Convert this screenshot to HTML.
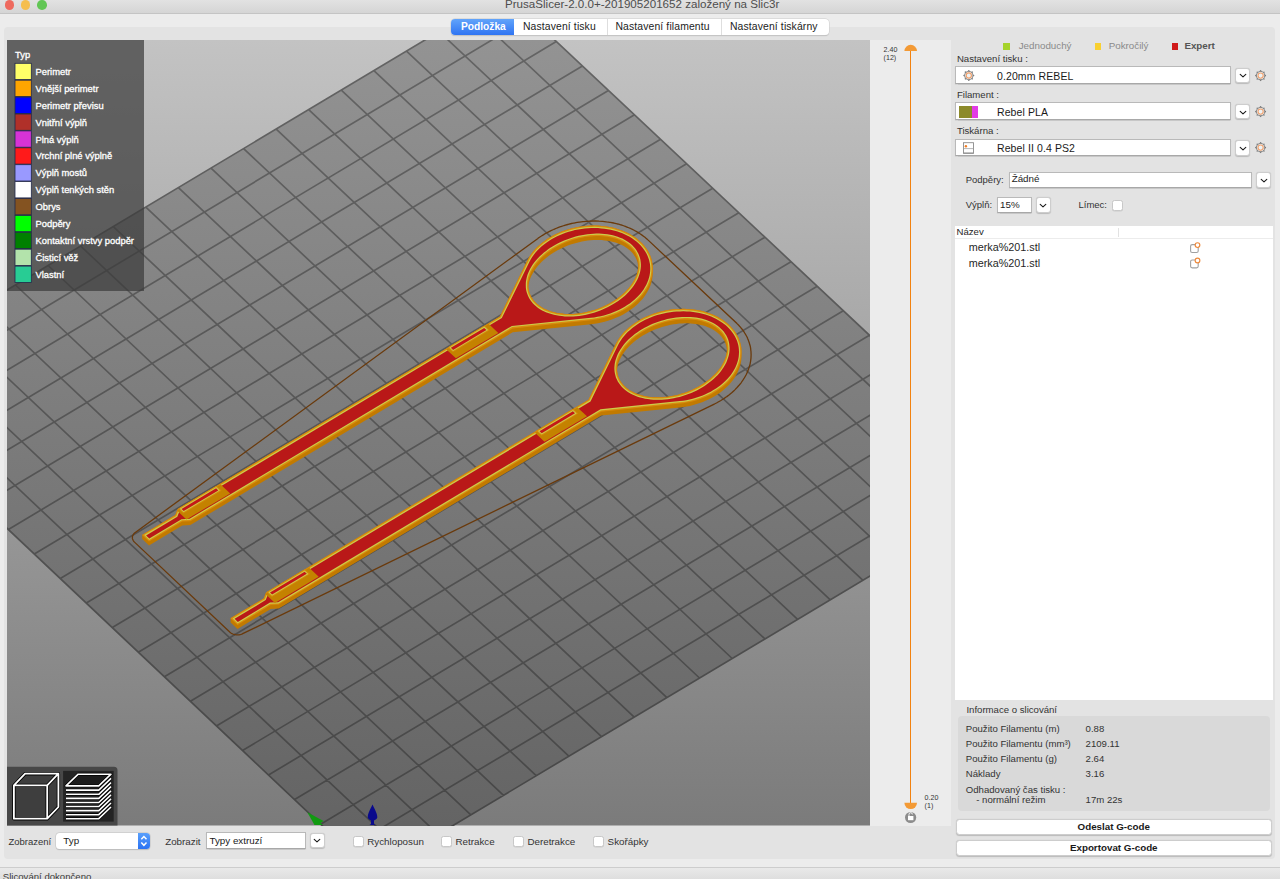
<!DOCTYPE html>
<html><head><meta charset="utf-8"><style>
*{margin:0;padding:0;box-sizing:border-box}
body{width:1280px;height:879px;overflow:hidden;background:#ececec;position:relative;font-family:"Liberation Sans",sans-serif;color:#262626}
.abs{position:absolute}
.t{position:absolute;white-space:nowrap;line-height:1}
.lg{font-family:"Liberation Sans",sans-serif;font-size:9.4px;fill:#fff;stroke:#fff;stroke-width:0.3px}
.combo{position:absolute;background:#fff;border:1px solid #b9b9b9;border-bottom-color:#a8a8a8;box-shadow:0 0.5px 1px rgba(0,0,0,0.12)}
.btn{position:absolute;background:#fff;border:1px solid #cdcdcd;border-radius:3px;box-shadow:0 0.5px 1px rgba(0,0,0,0.18)}
.chev{position:absolute;left:50%;top:50%;transform:translate(-50%,-38%)}
.cb{position:absolute;width:11px;height:11px;background:#fff;border:1px solid #c8c8c8;border-radius:2.5px;box-shadow:0 0.5px 0.5px rgba(0,0,0,0.1)}
</style></head><body>
<!-- title bar -->
<div class="abs" style="left:0;top:0;width:1280px;height:13.5px;background:linear-gradient(#e2e2e2,#d5d5d5);border-bottom:1px solid #c4c4c4"></div>
<div class="abs" style="left:4.8px;top:0;width:9.6px;height:9.6px;border-radius:50%;background:#ee6a5e;transform:translateY(0)"></div>
<div class="abs" style="left:20.8px;top:0;width:9.6px;height:9.6px;border-radius:50%;background:#f5be4f"></div>
<div class="abs" style="left:37px;top:0;width:9.6px;height:9.6px;border-radius:50%;background:#62c655"></div>
<div class="t" style="left:505px;top:-2px;font-size:11.6px;color:#4d4d4d">PrusaSlicer-2.0.0+-201905201652 založený na Slic3r</div>
<!-- inner panel -->
<div class="abs" style="left:4.4px;top:26.6px;width:1271px;height:832.3px;background:#e3e3e3;border-radius:4px"></div>
<!-- tabs -->
<div class="abs" style="left:451px;top:19px;width:378px;height:16px;background:#fff;border-radius:4px;box-shadow:0 0 0 0.5px #cfcfcf,0 0.5px 1px rgba(0,0,0,0.2)"></div>
<div class="abs" style="left:451px;top:19px;width:63px;height:16px;background:linear-gradient(#62a4fa,#2f74f2);border-radius:4px 0 0 4px"></div>
<div class="abs" style="left:607px;top:19px;width:1px;height:16px;background:#dedede"></div>
<div class="abs" style="left:721px;top:19px;width:1px;height:16px;background:#dedede"></div>
<div class="t" style="left:461px;top:21.8px;font-size:10.2px;font-weight:bold;color:#fff">Podložka</div>
<div class="t" style="left:523px;top:21.5px;font-size:10.4px;letter-spacing:0.12px;color:#222">Nastavení tisku</div>
<div class="t" style="left:615.5px;top:21.5px;font-size:10.4px;letter-spacing:0.12px;color:#222">Nastavení filamentu</div>
<div class="t" style="left:730px;top:21.5px;font-size:10.4px;letter-spacing:0.12px;color:#222">Nastavení tiskárny</div>
<!-- viewport -->
<svg class="abs" style="left:7px;top:40px" width="863" height="785.5" viewBox="7 40 863 785.5">
<defs>
<linearGradient id="bg" x1="0" y1="40" x2="0" y2="825.5" gradientUnits="userSpaceOnUse"><stop offset="0" stop-color="#c3c3c3"/><stop offset="1" stop-color="#7b7b7b"/></linearGradient>
<linearGradient id="bedg" x1="0" y1="40" x2="0" y2="825.5" gradientUnits="userSpaceOnUse"><stop offset="0" stop-color="#939393"/><stop offset="1" stop-color="#646464"/></linearGradient>
<linearGradient id="lineg" x1="0" y1="40" x2="0" y2="825.5" gradientUnits="userSpaceOnUse"><stop offset="0" stop-color="#646464"/><stop offset="1" stop-color="#474747"/></linearGradient>
</defs>
<rect x="7" y="40" width="863" height="785.5" fill="url(#bg)"/>
<path d="M504.2 -7.4L1026.4 482.5L372.8 873.5L-147.4 382.5Z" fill="url(#bedg)"/>
<path d="M504.2 -7.4L-147.4 382.5M504.2 -7.4L1026.4 482.5M530.3 17.0L-121.4 407.0M471.7 12.1L993.7 502.1M556.3 41.5L-95.5 431.5M439.1 31.6L961.0 521.6M582.4 65.9L-69.5 456.0M406.5 51.1L928.3 541.2M608.4 90.4L-43.6 480.5M373.9 70.6L895.6 560.7M634.5 114.8L-17.6 505.0M341.3 90.1L863.0 580.3M660.6 139.3L8.4 529.5M308.7 109.6L830.3 599.8M686.6 163.8L34.3 554.0M276.2 129.1L797.6 619.4M712.7 188.2L60.3 578.5M243.6 148.6L764.9 638.9M738.8 212.7L86.3 603.1M211.0 168.1L732.2 658.5M764.9 237.2L112.3 627.6M178.4 187.6L699.5 678.0M791.0 261.7L138.3 652.2M145.8 207.1L666.9 697.6M817.2 286.2L164.4 676.7M113.3 226.6L634.2 717.1M843.3 310.7L190.4 701.3M80.7 246.1L601.5 736.6M869.4 335.2L216.4 725.9M48.1 265.5L568.8 756.2M895.6 359.8L242.5 750.5M15.5 285.0L536.2 775.7M921.7 384.3L268.5 775.0M-17.0 304.5L503.5 795.3M947.9 408.8L294.6 799.6M-49.6 324.0L470.8 814.8M974.0 433.4L320.6 824.2M-82.2 343.5L438.1 834.4M1000.2 458.0L346.7 848.8M-114.8 363.0L405.4 853.9M1026.4 482.5L372.8 873.5M-147.4 382.5L372.8 873.5" stroke="url(#lineg)" stroke-width="1.7" fill="none"/>
<path d="M647.9 239.9L647.8 239.8L645.7 237.9L645.3 237.6L643.1 235.9L642.7 235.6L640.4 234L640 233.7L637.5 232.1L637.1 231.9L634.5 230.5L634.1 230.2L631.4 228.9L630.9 228.7L628.1 227.5L627.6 227.3L624.7 226.2L624.2 226L621.3 225L620.8 224.9L617.7 224L617.2 223.9L614.1 223.1L613.6 223L610.4 222.4L609.9 222.3L606.6 221.9L606.1 221.8L602.8 221.4L602.3 221.4L599 221.2L598.5 221.1L595.1 221L594.6 221L591.2 221.1L590.7 221.1L587.3 221.3L586.9 221.3L583.5 221.6L583 221.6L579.6 222.1L579.1 222.1L575.8 222.7L575.3 222.8L572 223.4L571.5 223.5L568.2 224.4L567.8 224.5L564.5 225.4L564.1 225.5L560.9 226.6L560.5 226.7L557.3 227.9L556.9 228L553.9 229.3L553.5 229.5L550.5 230.9L550.1 231.1L547.2 232.6L546.8 232.8L544 234.4L543.7 234.6L541 236.3L540.6 236.5L538 238.3L537.9 238.4L135.3 532.4L134.6 533L134.1 533.5L133.6 534.1L133.2 534.8L132.8 535.4L132.6 536.1L132.4 536.8L132.4 537.5L132.4 538.2L132.5 538.9L132.8 539.6L133.1 540.3L133.5 540.9L133.9 541.5L134.5 542.1L230 632.2L230.6 632.7L231.3 633.2L232 633.6L232.8 634L233.7 634.3L234.6 634.5L235.5 634.7L236.4 634.8L237.3 634.9L238.3 634.9L239.2 634.8L240.1 634.6L241 634.4L241.9 634.1L242.7 633.7L714.3 404.1L714.5 404L717.4 402.5L717.7 402.3L720.5 400.7L720.9 400.5L723.6 398.8L723.9 398.6L726.5 396.8L726.8 396.6L729.3 394.7L729.6 394.4L732 392.5L732.3 392.2L734.5 390.2L734.8 389.9L736.8 387.8L737.1 387.5L739 385.3L739.3 385L741.1 382.8L741.3 382.5L742.9 380.2L743.1 379.9L744.6 377.5L744.8 377.2L746.1 374.8L746.3 374.5L747.4 372.1L747.5 371.7L748.5 369.3L748.6 368.9L749.4 366.4L749.5 366.1L750.2 363.6L750.2 363.2L750.7 360.7L750.7 360.3L751 357.9L751 357.5L751.1 355L751.1 354.6L751 352.1L751 351.7L750.7 349.3L750.7 348.9L750.3 346.4L750.2 346L749.5 343.6L749.4 343.3L748.6 340.9L748.5 340.5L747.5 338.2L747.4 337.8L746.2 335.5L746 335.2L744.7 333L744.5 332.6L743 330.4L742.8 330.1L741.1 328L740.8 327.6L739.1 325.7L738.7 325.3L736.8 323.4L736.7 323.2Z" fill="none" stroke="#6a3a0c" stroke-width="1.3"/>
<path d="M626.1 232.2L623.3 231L620.4 229.9L617.4 228.9L614.4 228L611.2 227.3L608 226.7L604.8 226.2L601.5 225.9L598.1 225.6L594.8 225.5L591.4 225.6L588 225.7L584.6 226L581.2 226.5L577.8 227L574.5 227.7L571.2 228.5L567.9 229.4L564.7 230.5L561.6 231.6L558.5 232.9L555.5 234.3L552.6 235.8L549.8 237.4L547.1 239.1L544.6 240.9L542.1 242.7L539.8 244.7L537.5 246.7L535.5 248.8L533.5 251L531.8 253.3L530.1 255.5L528.7 257.9L527.4 260.3L499.9 316.4L177.6 509.2L175.3 515L142 534.9L142.3 535.2L142 535.4L142.3 535.7L142 535.9L142.3 536.2L142 536.4L142.3 536.7L142 536.9L142.3 537.2L142 537.3L142.3 537.6L142 537.8L142.3 538.1L142 538.3L142.3 538.6L142 538.8L149 545.4L182.3 525.5L190.4 525.1L512.7 332.3L591.2 324.2L594.6 323.7L598 323.2L601.3 322.5L604.6 321.7L607.9 320.8L611.1 319.7L614.2 318.6L617.3 317.3L620.3 315.9L623.2 314.4L626 312.8L628.7 311.1L631.3 309.3L633.7 307.5L636.1 305.5L638.3 303.5L640.3 301.3L642.3 299.2L644.1 296.9L645.7 294.6L647.1 292.3L648.4 289.9L649.6 287.5L650.6 285.1L651.3 282.6L652 280.1L652.4 277.6L652.7 275.1L652.8 272.6L652.8 268.7L652.7 266.3L652.4 263.8L652 261.4L651.4 259L650.6 256.6L649.6 254.3L648.5 252L647.2 249.8L645.7 247.7L644.1 245.6L642.3 243.6L640.4 241.7L638.4 239.9L636.2 238.1L633.8 236.5L631.4 235L628.8 233.5ZM601.6 307.3L598.8 308.4L596.1 309.4L593.2 310.3L590.4 311.1L587.5 311.8L584.6 312.4L581.8 313L578.9 313.4L576 313.7L573.2 313.9L570.3 314L567.6 314L564.8 313.9L562.1 313.6L559.5 313.3L556.9 312.9L554.4 312.3L552 311.7L549.7 311L547.5 310.1L545.3 309.2L543.3 308.2L541.4 307L539.5 305.8L537.9 304.5L536.3 303.2L534.9 301.7L533.6 300.2L532.4 298.6L531.4 297L530.5 295.2L529.7 293.5L529.1 291.6L528.7 289.8L528.3 287L528.4 285.9L528.7 283.8L529.2 281.8L529.8 279.8L530.5 277.7L531.4 275.7L532.5 273.7L533.7 271.7L535 269.7L536.4 267.7L538 265.8L539.7 263.9L541.5 262L543.4 260.2L545.5 258.4L547.6 256.7L549.9 255.1L552.2 253.5L554.6 252L557.1 250.6L559.7 249.2L562.3 247.9L565 246.7L567.8 245.6L570.6 244.6L573.4 243.7L576.2 242.9L579.1 242.2L582 241.6L584.9 241L587.7 240.6L590.6 240.3L593.4 240.1L596.3 240L599.1 240L601.8 240.1L604.5 240.4L607.1 240.7L609.7 241.1L612.2 241.7L614.6 242.3L616.9 243L619.2 243.9L621.3 244.8L623.3 245.8L625.3 247L627.1 248.2L628.8 249.4L630.3 250.8L631.8 252.3L633.1 253.8L634.2 255.4L635.3 257L636.1 258.8L636.9 260.5L637.5 262.3L637.9 264.2L638.3 267L638.2 268.1L637.9 270.1L637.4 272.2L636.8 274.2L636.1 276.2L635.2 278.3L634.1 280.3L633 282.3L631.7 284.3L630.2 286.3L628.6 288.2L626.9 290.1L625.1 292L623.2 293.8L621.1 295.6L619 297.3L616.7 298.9L614.4 300.5L612 302L609.5 303.4L606.9 304.8L604.3 306.1Z" fill="#c27a00" fill-rule="evenodd"/>
<path d="M633.8 236.5L631.4 235L628.8 233.5L626.1 232.2L623.3 231L620.4 229.9L617.4 228.9L614.4 228L611.2 227.3L608 226.7L604.8 226.2L601.5 225.9L598.1 225.6L594.8 225.5L591.4 225.6L588 225.7L584.6 226L581.2 226.5L577.8 227L574.5 227.7L571.2 228.5L567.9 229.4L564.7 230.5L561.6 231.6L558.5 232.9L555.5 234.3L552.6 235.8L549.8 237.4L547.1 239.1L544.6 240.9L542.1 242.7L539.8 244.7L537.5 246.7L535.5 248.8L533.5 251L531.8 253.3L530.1 255.5L528.7 257.9L527.4 260.3L499.9 316.4L177.6 509.2L175.3 515L142 534.9L149 541.5L182.3 521.6L190.4 521.2L512.7 328.4L591.2 320.3L594.6 319.8L598 319.3L601.3 318.6L604.6 317.8L607.9 316.9L611.1 315.8L614.2 314.7L617.3 313.4L620.3 312L623.2 310.5L626 308.9L628.7 307.2L631.3 305.4L633.7 303.6L636.1 301.6L638.3 299.6L640.3 297.4L642.3 295.3L644.1 293L645.7 290.7L647.1 288.4L648.4 286L649.6 283.6L650.6 281.2L651.3 278.7L652 276.2L652.4 273.7L652.7 271.2L652.8 268.7L652.7 266.3L652.4 263.8L652 261.4L651.4 259L650.6 256.6L649.6 254.3L648.5 252L647.2 249.8L645.7 247.7L644.1 245.6L642.3 243.6L640.4 241.7L638.4 239.9L636.2 238.1ZM609.5 303.4L606.9 304.8L604.3 306.1L601.6 307.3L598.8 308.4L596.1 309.4L593.2 310.3L590.4 311.1L587.5 311.8L584.6 312.4L581.8 313L578.9 313.4L576 313.7L573.2 313.9L570.3 314L567.6 314L564.8 313.9L562.1 313.6L559.5 313.3L556.9 312.9L554.4 312.3L552 311.7L549.7 311L547.5 310.1L545.3 309.2L543.3 308.2L541.4 307L539.5 305.8L537.9 304.5L536.3 303.2L534.9 301.7L533.6 300.2L532.4 298.6L531.4 297L530.5 295.2L529.7 293.5L529.1 291.6L528.7 289.8L528.4 287.9L528.3 285.9L528.3 284L528.4 282L528.7 279.9L529.2 277.9L529.8 275.9L530.5 273.8L531.4 271.8L532.5 269.8L533.7 267.8L535 265.8L536.4 263.8L538 261.9L539.7 260L541.5 258.1L543.4 256.3L545.5 254.5L547.6 252.8L549.9 251.2L552.2 249.6L554.6 248.1L557.1 246.7L559.7 245.3L562.3 244L565 242.8L567.8 241.7L570.6 240.7L573.4 239.8L576.2 239L579.1 238.3L582 237.7L584.9 237.1L587.7 236.7L590.6 236.4L593.4 236.2L596.3 236.1L599.1 236.1L601.8 236.2L604.5 236.5L607.1 236.8L609.7 237.2L612.2 237.8L614.6 238.4L616.9 239.1L619.2 240L621.3 240.9L623.3 241.9L625.3 243.1L627.1 244.3L628.8 245.5L630.3 246.9L631.8 248.4L633.1 249.9L634.2 251.5L635.3 253.1L636.1 254.9L636.9 256.6L637.5 258.4L637.9 260.3L638.2 262.2L638.4 264.2L638.4 266.1L638.2 268.1L637.9 270.1L637.4 272.2L636.8 274.2L636.1 276.2L635.2 278.3L634.1 280.3L633 282.3L631.7 284.3L630.2 286.3L628.6 288.2L626.9 290.1L625.1 292L623.2 293.8L621.1 295.6L619 297.3L616.7 298.9L614.4 300.5L612 302Z" fill="#d98c0e" fill-rule="evenodd"/>
<path d="M633.1 237.6L630.7 236.1L628.2 234.7L625.5 233.4L622.8 232.2L620 231.1L617 230.2L614 229.3L610.9 228.6L607.8 228L604.6 227.5L601.3 227.2L598.1 226.9L594.7 226.8L591.4 226.9L588.1 227L584.7 227.3L581.4 227.8L578.1 228.3L574.8 229L571.5 229.8L568.3 230.7L565.2 231.7L562.1 232.8L559 234.1L556.1 235.5L553.3 236.9L550.5 238.5L547.9 240.2L545.3 241.9L542.9 243.8L540.6 245.7L538.5 247.7L536.4 249.7L534.5 251.9L532.8 254L531.2 256.3L529.8 258.5L528.5 260.9L500.9 317.3L178.6 510.1L176.3 515.9L144.1 535.1L149.2 539.9L181.9 520.3L190 519.9L512.2 327.1L591.1 319L594.4 318.5L597.7 318L601 317.3L604.3 316.5L607.5 315.6L610.7 314.6L613.7 313.5L616.8 312.2L619.7 310.8L622.6 309.4L625.3 307.8L628 306.1L630.5 304.4L632.9 302.5L635.2 300.6L637.4 298.6L639.4 296.6L641.3 294.4L643 292.3L644.6 290L646 287.7L647.3 285.4L648.4 283.1L649.3 280.7L650.1 278.3L650.7 275.9L651.1 273.5L651.4 271.1L651.5 268.7L651.4 266.4L651.1 264L650.7 261.7L650.1 259.3L649.4 257.1L648.4 254.8L647.3 252.7L646.1 250.5L644.7 248.5L643.1 246.5L641.4 244.5L639.5 242.7L637.5 240.9L635.4 239.2ZM610.1 304.6L607.5 305.9L604.8 307.2L602.1 308.5L599.3 309.6L596.5 310.6L593.6 311.5L590.7 312.4L587.8 313.1L584.9 313.7L582 314.2L579 314.7L576.1 315L573.2 315.2L570.4 315.3L567.5 315.3L564.7 315.2L562 314.9L559.3 314.6L556.7 314.2L554.1 313.6L551.7 313L549.3 312.2L547 311.3L544.8 310.4L542.7 309.3L540.7 308.1L538.8 306.9L537 305.6L535.4 304.1L533.9 302.6L532.5 301L531.3 299.3L530.2 297.6L529.3 295.8L528.5 293.9L527.9 292L527.4 290L527.1 288L527 286L527 283.9L527.1 281.8L527.5 279.7L527.9 277.6L528.6 275.5L529.3 273.4L530.3 271.2L531.3 269.2L532.6 267.1L533.9 265L535.4 263L537 261L538.7 259.1L540.6 257.2L542.6 255.3L544.7 253.5L546.8 251.8L549.1 250.1L551.5 248.5L554 247L556.5 245.5L559.1 244.2L561.8 242.9L564.5 241.7L567.3 240.5L570.1 239.5L573 238.6L575.9 237.7L578.8 237L581.7 236.4L584.7 235.9L587.6 235.4L590.5 235.1L593.4 234.9L596.2 234.8L599.1 234.8L601.9 234.9L604.6 235.2L607.3 235.5L609.9 235.9L612.5 236.5L615 237.1L617.3 237.9L619.6 238.8L621.8 239.7L623.9 240.8L625.9 241.9L627.8 243.2L629.6 244.5L631.2 246L632.7 247.5L634.1 249.1L635.3 250.8L636.4 252.5L637.3 254.3L638.1 256.2L638.7 258.1L639.2 260.1L639.5 262.1L639.7 264.1L639.7 266.2L639.5 268.3L639.2 270.4L638.7 272.5L638.1 274.6L637.3 276.7L636.4 278.8L635.3 280.9L634.1 283L632.7 285.1L631.2 287.1L629.6 289.1L627.9 291L626 292.9L624.1 294.8L622 296.6L619.8 298.3L617.5 300L615.1 301.6L612.7 303.1Z" fill="#cccc4a" fill-rule="evenodd"/>
<path d="M632.4 238.6L630.1 237.1L627.6 235.7L625 234.5L622.4 233.3L619.6 232.2L616.7 231.3L613.7 230.5L610.7 229.8L607.6 229.2L604.4 228.7L601.2 228.4L598 228.1L594.7 228L591.4 228.1L588.1 228.2L584.8 228.5L581.6 228.9L578.3 229.5L575 230.1L571.8 230.9L568.7 231.8L565.6 232.8L562.5 234L559.5 235.2L556.6 236.5L553.8 238L551.1 239.5L548.5 241.2L546 242.9L543.7 244.7L541.4 246.6L539.3 248.5L537.3 250.6L535.5 252.6L533.8 254.8L532.2 256.9L530.8 259.2L529.6 261.4L501.8 318.1L179.6 510.9L177.3 516.7L146.1 535.4L149.3 538.4L181.5 519.2L189.6 518.7L511.9 325.9L590.9 317.8L594.2 317.4L597.5 316.8L600.8 316.2L604 315.4L607.1 314.5L610.3 313.5L613.3 312.3L616.3 311.1L619.2 309.8L622 308.3L624.7 306.8L627.3 305.1L629.8 303.4L632.2 301.6L634.4 299.7L636.5 297.8L638.5 295.7L640.4 293.7L642.1 291.5L643.6 289.4L645 287.1L646.2 284.9L647.3 282.6L648.2 280.3L648.9 278L649.5 275.7L649.9 273.4L650.2 271L650.3 268.7L650.2 266.4L650 264.2L649.5 261.9L649 259.7L648.2 257.5L647.3 255.3L646.3 253.2L645.1 251.2L643.7 249.2L642.2 247.2L640.5 245.3L638.7 243.5L636.8 241.8L634.7 240.2ZM610.7 305.6L608 307L605.3 308.3L602.6 309.6L599.7 310.7L596.9 311.7L594 312.7L591 313.5L588.1 314.3L585.1 314.9L582.2 315.4L579.2 315.9L576.2 316.2L573.3 316.4L570.4 316.5L567.5 316.5L564.7 316.4L561.9 316.1L559.1 315.8L556.5 315.3L553.9 314.8L551.3 314.1L548.9 313.3L546.5 312.4L544.3 311.5L542.1 310.4L540 309.2L538.1 307.9L536.3 306.5L534.6 305L533 303.4L531.6 301.8L530.3 300L529.2 298.2L528.2 296.3L527.4 294.3L526.7 292.3L526.2 290.3L525.9 288.2L525.8 286L525.8 283.9L525.9 281.7L526.3 279.5L526.8 277.3L527.4 275.1L528.2 272.9L529.2 270.7L530.3 268.6L531.5 266.4L532.9 264.3L534.4 262.3L536.1 260.3L537.9 258.3L539.8 256.3L541.8 254.4L543.9 252.6L546.1 250.9L548.4 249.1L550.8 247.5L553.3 246L555.9 244.5L558.6 243.1L561.3 241.8L564.1 240.5L566.9 239.4L569.7 238.4L572.6 237.4L575.6 236.6L578.5 235.8L581.5 235.2L584.5 234.7L587.4 234.2L590.4 233.9L593.3 233.7L596.2 233.6L599.1 233.6L601.9 233.7L604.7 234L607.5 234.3L610.2 234.8L612.8 235.3L615.3 236L617.7 236.8L620.1 237.7L622.4 238.6L624.5 239.7L626.6 240.9L628.5 242.2L630.3 243.6L632 245.1L633.6 246.7L635 248.3L636.3 250.1L637.4 251.9L638.4 253.8L639.2 255.7L639.9 257.8L640.4 259.8L640.7 261.9L640.9 264.1L640.9 266.2L640.7 268.4L640.4 270.6L639.9 272.8L639.2 275L638.4 277.2L637.4 279.4L636.3 281.5L635.1 283.6L633.7 285.7L632.2 287.8L630.5 289.8L628.8 291.8L626.9 293.8L624.9 295.7L622.7 297.5L620.5 299.2L618.2 301L615.8 302.6L613.3 304.1Z" fill="#b91818" fill-rule="evenodd"/>
<path d="M498.3 333L455.9 358.3L446.4 349.4L488.8 324Z" fill="#c48200"/>
<path d="M489.7 330.3L452.8 352.3L447.6 347.4L484.5 325.4Z" fill="#d68a0a"/>
<path d="M488.1 330.1L484.4 326.6L449.3 347.6L453 351.1Z" fill="#cccc4a"/>
<path d="M486.4 329.9L484.2 327.9L450.9 347.8L453.1 349.9Z" fill="#c41818"/>
<path d="M230.2 493.4L186.4 519.5L177 510.6L220.7 484.4Z" fill="#c48200"/>
<path d="M221.6 490.7L183.4 513.5L178.2 508.6L216.4 485.8Z" fill="#d68a0a"/>
<path d="M219.9 490.5L216.2 487.1L179.8 508.8L183.5 512.3Z" fill="#cccc4a"/>
<path d="M218.3 490.4L216.1 488.3L181.5 509L183.7 511Z" fill="#c41818"/>
<path d="M714.8 315.5L712 314.3L709.1 313.2L706.1 312.2L703.1 311.3L699.9 310.6L696.7 310L693.5 309.5L690.1 309.2L686.8 308.9L683.4 308.8L680.1 308.9L676.7 309L673.3 309.3L669.9 309.7L666.5 310.3L663.2 311L659.9 311.8L656.6 312.7L653.4 313.8L650.3 314.9L647.2 316.2L644.2 317.6L641.3 319.1L638.5 320.7L635.8 322.4L633.2 324.2L630.7 326L628.4 328L626.2 330L624.1 332.1L622.2 334.3L620.4 336.6L618.8 338.8L617.3 341.2L616 343.6L588.5 399.7L266.1 592.6L263.7 598.4L230.4 618.3L230.8 618.6L230.4 618.8L230.8 619.1L230.4 619.3L230.8 619.6L230.4 619.8L230.8 620.1L230.4 620.3L230.8 620.6L230.4 620.8L230.8 621.1L230.4 621.3L230.8 621.6L230.4 621.8L230.8 622.1L230.4 622.2L237.5 628.9L270.8 609L278.8 608.5L601.3 415.6L679.9 407.5L683.3 407.1L686.7 406.5L690 405.9L693.3 405.1L696.6 404.1L699.8 403.1L702.9 401.9L706 400.6L709 399.3L711.9 397.8L714.7 396.2L717.4 394.5L720 392.7L722.5 390.8L724.8 388.8L727 386.8L729.1 384.7L731 382.5L732.8 380.3L734.4 378L735.9 375.6L737.2 373.3L738.3 370.8L739.3 368.4L740.1 365.9L740.7 363.4L741.2 360.9L741.4 358.5L741.5 356L741.5 352.1L741.4 349.6L741.2 347.1L740.7 344.7L740.1 342.3L739.3 339.9L738.4 337.6L737.2 335.4L735.9 333.1L734.5 331L732.8 328.9L731.1 326.9L729.1 325L727.1 323.2L724.9 321.5L722.5 319.8L720.1 318.3L717.5 316.8ZM690.3 390.6L687.6 391.7L684.8 392.7L681.9 393.6L679.1 394.5L676.2 395.2L673.3 395.8L670.5 396.3L667.6 396.7L664.7 397L661.9 397.2L659 397.3L656.2 397.3L653.5 397.2L650.8 397L648.2 396.7L645.6 396.2L643.1 395.7L640.7 395L638.4 394.3L636.1 393.5L634 392.5L632 391.5L630 390.4L628.2 389.2L626.5 387.9L625 386.5L623.5 385.1L622.2 383.5L621 381.9L620 380.3L619.1 378.6L618.4 376.8L617.8 375L617.4 373.1L617 370.3L617.1 369.2L617.4 367.2L617.8 365.1L618.4 363.1L619.2 361.1L620.1 359L621.1 357L622.3 355L623.6 353L625.1 351L626.6 349.1L628.3 347.2L630.2 345.3L632.1 343.5L634.1 341.7L636.3 340L638.5 338.4L640.9 336.8L643.3 335.3L645.8 333.9L648.4 332.5L651 331.2L653.7 330L656.4 328.9L659.2 327.9L662.1 327L664.9 326.2L667.8 325.5L670.7 324.8L673.5 324.3L676.4 323.9L679.3 323.6L682.1 323.4L685 323.3L687.7 323.3L690.5 323.4L693.2 323.7L695.8 324L698.4 324.4L700.9 325L703.3 325.6L705.6 326.3L707.9 327.2L710 328.1L712 329.1L714 330.3L715.8 331.5L717.5 332.8L719 334.1L720.5 335.6L721.8 337.1L722.9 338.7L724 340.3L724.9 342.1L725.6 343.8L726.2 345.7L726.6 347.5L727 350.4L726.9 351.5L726.6 353.5L726.2 355.5L725.6 357.5L724.8 359.6L723.9 361.6L722.9 363.6L721.7 365.7L720.4 367.7L718.9 369.6L717.4 371.6L715.7 373.5L713.8 375.3L711.9 377.1L709.9 378.9L707.7 380.6L705.5 382.3L703.1 383.8L700.7 385.3L698.2 386.8L695.6 388.1L693 389.4Z" fill="#c27a00" fill-rule="evenodd"/>
<path d="M722.5 319.8L720.1 318.3L717.5 316.8L714.8 315.5L712 314.3L709.1 313.2L706.1 312.2L703.1 311.3L699.9 310.6L696.7 310L693.5 309.5L690.1 309.2L686.8 308.9L683.4 308.8L680.1 308.9L676.7 309L673.3 309.3L669.9 309.7L666.5 310.3L663.2 311L659.9 311.8L656.6 312.7L653.4 313.8L650.3 314.9L647.2 316.2L644.2 317.6L641.3 319.1L638.5 320.7L635.8 322.4L633.2 324.2L630.7 326L628.4 328L626.2 330L624.1 332.1L622.2 334.3L620.4 336.6L618.8 338.8L617.3 341.2L616 343.6L588.5 399.7L266.1 592.6L263.7 598.4L230.4 618.3L237.5 625L270.8 605.1L278.8 604.6L601.3 411.7L679.9 403.6L683.3 403.2L686.7 402.6L690 402L693.3 401.2L696.6 400.2L699.8 399.2L702.9 398L706 396.7L709 395.4L711.9 393.9L714.7 392.3L717.4 390.6L720 388.8L722.5 386.9L724.8 384.9L727 382.9L729.1 380.8L731 378.6L732.8 376.4L734.4 374.1L735.9 371.7L737.2 369.4L738.3 366.9L739.3 364.5L740.1 362L740.7 359.5L741.2 357L741.4 354.6L741.5 352.1L741.4 349.6L741.2 347.1L740.7 344.7L740.1 342.3L739.3 339.9L738.4 337.6L737.2 335.4L735.9 333.1L734.5 331L732.8 328.9L731.1 326.9L729.1 325L727.1 323.2L724.9 321.5ZM698.2 386.8L695.6 388.1L693 389.4L690.3 390.6L687.6 391.7L684.8 392.7L681.9 393.6L679.1 394.5L676.2 395.2L673.3 395.8L670.5 396.3L667.6 396.7L664.7 397L661.9 397.2L659 397.3L656.2 397.3L653.5 397.2L650.8 397L648.2 396.7L645.6 396.2L643.1 395.7L640.7 395L638.4 394.3L636.1 393.5L634 392.5L632 391.5L630 390.4L628.2 389.2L626.5 387.9L625 386.5L623.5 385.1L622.2 383.5L621 381.9L620 380.3L619.1 378.6L618.4 376.8L617.8 375L617.4 373.1L617.1 371.2L616.9 369.3L616.9 367.3L617.1 365.3L617.4 363.3L617.8 361.2L618.4 359.2L619.2 357.2L620.1 355.1L621.1 353.1L622.3 351.1L623.6 349.1L625.1 347.1L626.6 345.2L628.3 343.3L630.2 341.4L632.1 339.6L634.1 337.8L636.3 336.1L638.5 334.5L640.9 332.9L643.3 331.4L645.8 330L648.4 328.6L651 327.3L653.7 326.1L656.4 325L659.2 324L662.1 323.1L664.9 322.3L667.8 321.6L670.7 320.9L673.5 320.4L676.4 320L679.3 319.7L682.1 319.5L685 319.4L687.7 319.4L690.5 319.5L693.2 319.8L695.8 320.1L698.4 320.5L700.9 321.1L703.3 321.7L705.6 322.4L707.9 323.3L710 324.2L712 325.2L714 326.4L715.8 327.6L717.5 328.9L719 330.2L720.5 331.7L721.8 333.2L722.9 334.8L724 336.4L724.9 338.2L725.6 339.9L726.2 341.8L726.6 343.6L726.9 345.5L727.1 347.5L727.1 349.5L726.9 351.5L726.6 353.5L726.2 355.5L725.6 357.5L724.8 359.6L723.9 361.6L722.9 363.6L721.7 365.7L720.4 367.7L718.9 369.6L717.4 371.6L715.7 373.5L713.8 375.3L711.9 377.1L709.9 378.9L707.7 380.6L705.5 382.3L703.1 383.8L700.7 385.3Z" fill="#d98c0e" fill-rule="evenodd"/>
<path d="M721.8 320.9L719.4 319.4L716.9 318L714.3 316.7L711.5 315.5L708.7 314.4L705.7 313.4L702.7 312.6L699.6 311.9L696.5 311.3L693.3 310.8L690 310.4L686.7 310.2L683.4 310.1L680.1 310.2L676.7 310.3L673.4 310.6L670.1 311L666.7 311.6L663.4 312.2L660.2 313L657 314L653.8 315L650.7 316.1L647.7 317.4L644.8 318.8L641.9 320.2L639.2 321.8L636.5 323.5L634 325.2L631.6 327L629.3 329L627.1 331L625.1 333L623.2 335.1L621.5 337.3L619.9 339.6L618.4 341.8L617.2 344.2L589.5 400.6L267.1 593.5L264.8 599.3L232.6 618.6L237.6 623.4L270.4 603.8L278.5 603.4L600.9 410.5L679.8 402.3L683.1 401.9L686.5 401.4L689.7 400.7L693 399.9L696.2 399L699.4 398L702.5 396.8L705.5 395.6L708.4 394.2L711.3 392.7L714 391.1L716.7 389.5L719.2 387.7L721.6 385.9L723.9 384L726.1 382L728.1 379.9L730 377.8L731.7 375.6L733.3 373.4L734.8 371.1L736 368.8L737.1 366.4L738.1 364.1L738.8 361.7L739.4 359.3L739.9 356.9L740.1 354.5L740.2 352.1L740.1 349.7L739.9 347.3L739.5 345L738.9 342.7L738.1 340.4L737.2 338.2L736.1 336L734.8 333.8L733.4 331.8L731.8 329.8L730.1 327.8L728.3 326L726.2 324.2L724.1 322.5ZM698.8 387.9L696.2 389.3L693.5 390.6L690.8 391.8L688 392.9L685.2 393.9L682.3 394.9L679.4 395.7L676.5 396.4L673.6 397.1L670.7 397.6L667.7 398L664.8 398.3L661.9 398.5L659.1 398.6L656.2 398.6L653.4 398.5L650.7 398.3L648 397.9L645.4 397.5L642.8 397L640.3 396.3L637.9 395.5L635.6 394.7L633.4 393.7L631.3 392.6L629.3 391.5L627.5 390.2L625.7 388.9L624.1 387.5L622.6 385.9L621.2 384.3L620 382.7L618.9 380.9L618 379.1L617.2 377.2L616.5 375.3L616.1 373.4L615.8 371.3L615.6 369.3L615.6 367.2L615.8 365.1L616.1 363L616.6 360.9L617.2 358.8L618 356.7L618.9 354.6L620 352.5L621.2 350.4L622.6 348.3L624 346.3L625.7 344.3L627.4 342.4L629.3 340.5L631.2 338.6L633.3 336.8L635.5 335.1L637.8 333.4L640.2 331.8L642.6 330.3L645.2 328.8L647.8 327.4L650.5 326.2L653.2 324.9L656 323.8L658.8 322.8L661.7 321.9L664.6 321L667.5 320.3L670.4 319.7L673.3 319.1L676.3 318.7L679.2 318.4L682.1 318.2L684.9 318.1L687.8 318.1L690.6 318.2L693.3 318.5L696 318.8L698.6 319.2L701.2 319.8L703.7 320.4L706 321.2L708.3 322.1L710.6 323L712.7 324.1L714.7 325.3L716.5 326.5L718.3 327.8L719.9 329.3L721.4 330.8L722.8 332.4L724 334.1L725.1 335.8L726 337.6L726.8 339.5L727.5 341.4L727.9 343.4L728.2 345.4L728.4 347.4L728.4 349.5L728.2 351.6L727.9 353.7L727.4 355.8L726.8 358L726 360.1L725.1 362.2L724 364.3L722.8 366.3L721.5 368.4L720 370.4L718.4 372.4L716.6 374.4L714.8 376.3L712.8 378.1L710.7 379.9L708.5 381.6L706.2 383.3L703.8 384.9L701.4 386.5Z" fill="#cccc4a" fill-rule="evenodd"/>
<path d="M721.2 321.9L718.8 320.4L716.3 319L713.7 317.8L711.1 316.6L708.3 315.5L705.4 314.6L702.4 313.8L699.4 313L696.3 312.5L693.1 312L689.9 311.6L686.7 311.4L683.4 311.3L680.1 311.4L676.8 311.5L673.5 311.8L670.2 312.2L667 312.8L663.7 313.4L660.5 314.2L657.3 315.1L654.2 316.1L651.2 317.2L648.2 318.5L645.3 319.8L642.5 321.3L639.8 322.8L637.2 324.5L634.7 326.2L632.3 328L630.1 329.9L627.9 331.8L626 333.8L624.1 335.9L622.4 338.1L620.9 340.2L619.5 342.4L618.2 344.7L590.5 401.5L268.1 594.3L265.7 600.1L234.6 618.8L237.8 621.9L270 602.6L278.1 602.2L600.5 409.3L679.6 401.1L683 400.7L686.2 400.2L689.5 399.5L692.7 398.7L695.9 397.8L699 396.8L702 395.7L705 394.5L707.9 393.1L710.7 391.7L713.4 390.1L716 388.5L718.5 386.8L720.9 385L723.2 383.1L725.3 381.1L727.3 379.1L729.1 377L730.8 374.9L732.3 372.7L733.7 370.5L735 368.2L736 366L736.9 363.7L737.7 361.3L738.3 359L738.7 356.7L738.9 354.4L739 352.1L738.9 349.8L738.7 347.5L738.3 345.2L737.7 343L737 340.8L736.1 338.7L735 336.6L733.8 334.5L732.4 332.5L730.9 330.5L729.3 328.7L727.4 326.8L725.5 325.1L723.4 323.5ZM699.4 389L696.8 390.4L694 391.7L691.3 392.9L688.4 394L685.6 395.1L682.7 396L679.7 396.9L676.8 397.6L673.8 398.3L670.9 398.8L667.9 399.2L664.9 399.5L662 399.7L659.1 399.8L656.2 399.8L653.4 399.7L650.6 399.5L647.8 399.1L645.1 398.7L642.5 398.1L640 397.4L637.6 396.7L635.2 395.8L632.9 394.8L630.8 393.7L628.7 392.5L626.8 391.2L624.9 389.8L623.2 388.3L621.7 386.8L620.3 385.1L619 383.3L617.8 381.5L616.9 379.6L616 377.7L615.4 375.6L614.9 373.6L614.6 371.5L614.4 369.3L614.4 367.2L614.6 365L614.9 362.8L615.4 360.6L616.1 358.4L616.9 356.2L617.8 354L618.9 351.9L620.2 349.8L621.6 347.7L623.1 345.6L624.7 343.6L626.5 341.6L628.4 339.6L630.4 337.7L632.5 335.9L634.8 334.1L637.1 332.4L639.5 330.8L642 329.3L644.6 327.8L647.2 326.4L650 325.1L652.7 323.8L655.6 322.7L658.4 321.7L661.3 320.7L664.3 319.9L667.2 319.1L670.2 318.5L673.1 318L676.1 317.5L679.1 317.2L682 317L684.9 316.9L687.8 316.9L690.6 317L693.4 317.3L696.2 317.6L698.8 318.1L701.5 318.6L704 319.3L706.4 320.1L708.8 321L711.1 321.9L713.2 323L715.3 324.2L717.2 325.5L719.1 326.9L720.7 328.4L722.3 330L723.7 331.6L725 333.4L726.2 335.2L727.1 337.1L728 339.1L728.6 341.1L729.1 343.1L729.4 345.3L729.6 347.4L729.6 349.6L729.4 351.7L729.1 353.9L728.6 356.1L727.9 358.3L727.1 360.5L726.2 362.7L725.1 364.8L723.8 367L722.4 369.1L720.9 371.2L719.3 373.2L717.5 375.2L715.6 377.1L713.6 379L711.5 380.8L709.2 382.6L706.9 384.3L704.5 385.9L702 387.5Z" fill="#b91818" fill-rule="evenodd"/>
<path d="M587 416.3L544.5 441.7L535 432.7L577.4 407.4Z" fill="#c48200"/>
<path d="M578.3 413.6L541.5 435.7L536.2 430.8L573.1 408.7Z" fill="#d68a0a"/>
<path d="M576.7 413.5L573 410L537.9 431L541.6 434.5Z" fill="#cccc4a"/>
<path d="M575 413.3L572.9 411.2L539.5 431.2L541.7 433.2Z" fill="#c41818"/>
<path d="M318.7 576.8L274.9 603L265.4 594L309.2 567.8Z" fill="#c48200"/>
<path d="M310.1 574.1L271.9 597L266.7 592.1L304.8 569.2Z" fill="#d68a0a"/>
<path d="M308.4 574L304.7 570.5L268.3 592.2L272 595.7Z" fill="#cccc4a"/>
<path d="M306.8 573.8L304.6 571.7L270 592.4L272.1 594.5Z" fill="#c41818"/>
<path d="M372.5 804.5 C370 810 367.5 814 367.8 817.5 C368.3 819.5 370 820 371 820.5 L371 824 L369.5 825 L375.5 825 L374 824 L374 820.5 C375 820 376.8 819.5 377.3 817.5 C377.5 814 375 810 372.5 804.5Z" fill="#0a0a8c"/><path d="M307.3 812.3 L323.5 821 L320.5 823 L323 825 L314.5 825 Z" fill="#119a11"/>
<g>
<rect x="7" y="40" width="137" height="251" fill="#3c3c3c" fill-opacity="0.72"/>
<text x="15" y="57.5" class="lg">Typ</text>
<rect x="15" y="63.3" width="16.3" height="16.3" fill="#FFFF68" stroke="#22284a" stroke-width="0.8"/>
<text x="35.5" y="74.9" class="lg">Perimetr</text>
<rect x="15" y="80.2" width="16.3" height="16.3" fill="#FFA500" stroke="#22284a" stroke-width="0.8"/>
<text x="35.5" y="91.8" class="lg">Vnější perimetr</text>
<rect x="15" y="97.1" width="16.3" height="16.3" fill="#0000FF" stroke="#22284a" stroke-width="0.8"/>
<text x="35.5" y="108.7" class="lg">Perimetr převisu</text>
<rect x="15" y="114.0" width="16.3" height="16.3" fill="#B03029" stroke="#22284a" stroke-width="0.8"/>
<text x="35.5" y="125.6" class="lg">Vnitřní výplň</text>
<rect x="15" y="130.9" width="16.3" height="16.3" fill="#D633D6" stroke="#22284a" stroke-width="0.8"/>
<text x="35.5" y="142.5" class="lg">Plná výplň</text>
<rect x="15" y="147.8" width="16.3" height="16.3" fill="#FF1A1A" stroke="#22284a" stroke-width="0.8"/>
<text x="35.5" y="159.4" class="lg">Vrchní plné výplně</text>
<rect x="15" y="164.7" width="16.3" height="16.3" fill="#9999FF" stroke="#22284a" stroke-width="0.8"/>
<text x="35.5" y="176.3" class="lg">Výplň mostů</text>
<rect x="15" y="181.6" width="16.3" height="16.3" fill="#FFFFFF" stroke="#22284a" stroke-width="0.8"/>
<text x="35.5" y="193.2" class="lg">Výplň tenkých stěn</text>
<rect x="15" y="198.5" width="16.3" height="16.3" fill="#845321" stroke="#22284a" stroke-width="0.8"/>
<text x="35.5" y="210.1" class="lg">Obrys</text>
<rect x="15" y="215.4" width="16.3" height="16.3" fill="#00FF00" stroke="#22284a" stroke-width="0.8"/>
<text x="35.5" y="227.0" class="lg">Podpěry</text>
<rect x="15" y="232.3" width="16.3" height="16.3" fill="#008000" stroke="#22284a" stroke-width="0.8"/>
<text x="35.5" y="243.9" class="lg">Kontaktní vrstvy podpěr</text>
<rect x="15" y="249.2" width="16.3" height="16.3" fill="#B3E3AB" stroke="#22284a" stroke-width="0.8"/>
<text x="35.5" y="260.8" class="lg">Čisticí věž</text>
<rect x="15" y="266.1" width="16.3" height="16.3" fill="#28CC94" stroke="#22284a" stroke-width="0.8"/>
<text x="35.5" y="277.7" class="lg">Vlastní</text>
</g>
<path d="M7 766.7H114a3.5 3.5 0 0 1 3.5 3.5V825.5H7Z" fill="#474747"/>
<rect x="63.1" y="770.9" width="50.6" height="50.7" fill="#242424"/>
<path d="M13.9 785.4L25.1 773.6999999999999L58.400000000000006 773.6999999999999L58.400000000000006 807.0L47.2 818.7L13.9 818.7Z" fill="#3e3e3e"/>
<path d="M13.9 785.4L25.1 773.6999999999999L58.400000000000006 773.6999999999999L58.400000000000006 807.0L47.2 818.7L13.9 818.7ZM13.9 785.4L47.2 785.4L58.400000000000006 773.6999999999999M47.2 785.4L47.2 818.7" fill="none" stroke="#000" stroke-width="3.4" stroke-linejoin="round"/>
<path d="M13.9 785.4L25.1 773.6999999999999L58.400000000000006 773.6999999999999L58.400000000000006 807.0L47.2 818.7L13.9 818.7ZM13.9 785.4L47.2 785.4L58.400000000000006 773.6999999999999M47.2 785.4L47.2 818.7" fill="none" stroke="#fff" stroke-width="1.8" stroke-linejoin="round"/>
<path d="M66.0 785.9L78.2 774.1999999999999L111.0 774.1999999999999L98.8 785.9Z" fill="#1c1c1c"/>
<path d="M66.0 785.9L78.2 774.1999999999999L111.0 774.1999999999999L98.8 785.9ZM66.0 790.1L98.8 790.1L111.0 778.4M66.0 794.3L98.8 794.3L111.0 782.5999999999999M66.0 798.4L98.8 798.4L111.0 786.6999999999999M66.0 802.5L98.8 802.5L111.0 790.8M66.0 806.5L98.8 806.5L111.0 794.8M66.0 810.6L98.8 810.6L111.0 798.9M66.0 814.7L98.8 814.7L111.0 803.0M66.0 818.7L98.8 818.7L111.0 807.0" fill="none" stroke="#000" stroke-width="2.9" stroke-linejoin="round"/>
<path d="M66.0 785.9L78.2 774.1999999999999L111.0 774.1999999999999L98.8 785.9ZM66.0 790.1L98.8 790.1L111.0 778.4M66.0 794.3L98.8 794.3L111.0 782.5999999999999M66.0 798.4L98.8 798.4L111.0 786.6999999999999M66.0 802.5L98.8 802.5L111.0 790.8M66.0 806.5L98.8 806.5L111.0 794.8M66.0 810.6L98.8 810.6L111.0 798.9M66.0 814.7L98.8 814.7L111.0 803.0M66.0 818.7L98.8 818.7L111.0 807.0" fill="none" stroke="#fff" stroke-width="1.6" stroke-linejoin="round"/>
</svg>
<!-- slider panel -->
<div class="abs" style="left:870.3px;top:40px;width:80.7px;height:785.5px;background:#ececec"></div>
<div class="abs" style="left:909.7px;top:51px;width:1.8px;height:752px;background:#f2820f"></div>
<svg class="abs" style="left:870px;top:40px" width="81" height="786" viewBox="870 40 81 786">
<path d="M904.4 51.1 A6.3 6.3 0 0 1 917 51.1 Z" fill="#f39a35"/>
<path d="M904.4 802.7 A6.3 6.3 0 0 0 917 802.7 Z" fill="#f39a35"/>
<circle cx="910.6" cy="817.5" r="5.6" fill="#8c8c8c"/>
<rect x="908" y="816" width="5.4" height="4.2" fill="#fff"/>
<path d="M909 816 v-1.6 a1.7 1.7 0 0 1 3.4 0" fill="none" stroke="#fff" stroke-width="0.9"/>
<text x="883.6" y="51.8" font-size="7.1" fill="#333" font-family="Liberation Sans">2.40</text>
<text x="883.6" y="59.6" font-size="7.1" fill="#333" font-family="Liberation Sans">(12)</text>
<text x="924.6" y="800.3" font-size="7.1" fill="#333" font-family="Liberation Sans">0.20</text>
<text x="924.6" y="808" font-size="7.1" fill="#333" font-family="Liberation Sans">(1)</text>
</svg>
<!-- right sidebar -->
<div class="abs" style="left:1003.3px;top:43.4px;width:6.3px;height:6.3px;background:#a5d32b"></div>
<div class="t" style="left:1018.7px;top:41.4px;font-size:9.8px;color:#8a8a8a">Jednoduchý</div>
<div class="abs" style="left:1095px;top:43.4px;width:6.3px;height:6.3px;background:#f9d030"></div>
<div class="t" style="left:1108.7px;top:41.4px;font-size:9.8px;color:#8a8a8a">Pokročilý</div>
<div class="abs" style="left:1171.7px;top:43.4px;width:6.3px;height:6.3px;background:#d01a1a"></div>
<div class="t" style="left:1184.4px;top:41.4px;font-size:9.8px;font-weight:bold;color:#555">Expert</div>

<div class="t" style="left:956.9px;top:53.5px;font-size:9.6px;color:#333">Nastavení tisku :</div>
<div class="combo" style="left:955.2px;top:66.2px;width:276.3px;height:17.6px"></div>
<div class="t" style="left:997px;top:70.5px;font-size:10.5px;letter-spacing:0.1px;color:#1a1a1a">0.20mm REBEL</div>
<div class="t" style="left:956.9px;top:89.5px;font-size:9.6px;color:#333">Filament :</div>
<div class="combo" style="left:955.2px;top:102.4px;width:276.3px;height:17.7px"></div>
<div class="abs" style="left:959px;top:105.9px;width:12.6px;height:11.7px;background:#8c8a2a"></div>
<div class="abs" style="left:971.6px;top:105.9px;width:6.4px;height:11.7px;background:#e23ce6"></div>
<div class="t" style="left:997px;top:106.8px;font-size:10.5px;letter-spacing:0.1px;color:#1a1a1a">Rebel PLA</div>
<div class="t" style="left:956.9px;top:125.8px;font-size:9.6px;color:#333">Tiskárna :</div>
<div class="combo" style="left:955.2px;top:139px;width:276.3px;height:17.3px"></div>
<div class="t" style="left:997px;top:143.2px;font-size:10.5px;letter-spacing:0.1px;color:#1a1a1a">Rebel II 0.4 PS2</div>
<svg class="abs" style="left:955px;top:60px" width="320" height="100" viewBox="955 60 320 100">
<g id="gear"><circle cx="968.8" cy="75.5" r="4.2" fill="#eef2f4" stroke="#7a7a7a" stroke-width="0.9"/><circle cx="973.55" cy="75.50" r="0.8" fill="#7c7c7c"/><circle cx="972.16" cy="78.86" r="0.8" fill="#7c7c7c"/><circle cx="968.80" cy="80.25" r="0.8" fill="#7c7c7c"/><circle cx="965.44" cy="78.86" r="0.8" fill="#7c7c7c"/><circle cx="964.05" cy="75.50" r="0.8" fill="#7c7c7c"/><circle cx="965.44" cy="72.14" r="0.8" fill="#7c7c7c"/><circle cx="968.80" cy="70.75" r="0.8" fill="#7c7c7c"/><circle cx="972.16" cy="72.14" r="0.8" fill="#7c7c7c"/><circle cx="968.8" cy="75.5" r="2.6" fill="none" stroke="#f2a06a" stroke-width="1.1"/></g>
<g transform="translate(291.8,0.1)"><use href="#gear"/></g>
<g transform="translate(291.8,36.1)"><use href="#gear"/></g>
<g transform="translate(291.8,72.1)"><use href="#gear"/></g>
<rect x="963.5" y="142.7" width="10" height="10.6" fill="#fff" stroke="#8a8a8a" stroke-width="0.9"/>
<line x1="963.5" y1="148.6" x2="973.5" y2="148.6" stroke="#9a9a9a" stroke-width="0.7"/><line x1="963.5" y1="153" x2="973.5" y2="153" stroke="#8a8a8a" stroke-width="0.9"/>
<circle cx="965.9" cy="146.2" r="1.2" fill="#f07c20"/>
</svg>
<div class="btn" style="left:1235px;top:67.6px;width:15.2px;height:15.5px"><svg class="chev" width="8" height="5" viewBox="0 0 8 5"><path d="M1.2 1.2 L4 3.8 L6.8 1.2" fill="none" stroke="#1c1c1c" stroke-width="1.1" stroke-linecap="round" stroke-linejoin="round"/></svg></div>
<div class="btn" style="left:1235px;top:103.8px;width:15.2px;height:15.5px"><svg class="chev" width="8" height="5" viewBox="0 0 8 5"><path d="M1.2 1.2 L4 3.8 L6.8 1.2" fill="none" stroke="#1c1c1c" stroke-width="1.1" stroke-linecap="round" stroke-linejoin="round"/></svg></div>
<div class="btn" style="left:1235px;top:140px;width:15.2px;height:15.5px"><svg class="chev" width="8" height="5" viewBox="0 0 8 5"><path d="M1.2 1.2 L4 3.8 L6.8 1.2" fill="none" stroke="#1c1c1c" stroke-width="1.1" stroke-linecap="round" stroke-linejoin="round"/></svg></div>

<div class="t" style="left:965.7px;top:175.3px;font-size:9.5px;color:#333">Podpěry:</div>
<div class="combo" style="left:1008.5px;top:172px;width:243.7px;height:16.3px"></div>
<div class="t" style="left:1011.7px;top:174px;font-size:9.8px;color:#1a1a1a">Žádné</div>
<div class="btn" style="left:1255.8px;top:172.4px;width:15.5px;height:15.7px"><svg class="chev" width="8" height="5" viewBox="0 0 8 5"><path d="M1.2 1.2 L4 3.8 L6.8 1.2" fill="none" stroke="#1c1c1c" stroke-width="1.1" stroke-linecap="round" stroke-linejoin="round"/></svg></div>
<div class="t" style="left:965.7px;top:200.3px;font-size:9.5px;color:#333">Výplň:</div>
<div class="combo" style="left:996.5px;top:196.6px;width:35.2px;height:16.9px"></div>
<div class="t" style="left:1000px;top:199.5px;font-size:9.8px;color:#1a1a1a">15%</div>
<div class="btn" style="left:1035.6px;top:196.6px;width:15.5px;height:16.2px"><svg class="chev" width="8" height="5" viewBox="0 0 8 5"><path d="M1.2 1.2 L4 3.8 L6.8 1.2" fill="none" stroke="#1c1c1c" stroke-width="1.1" stroke-linecap="round" stroke-linejoin="round"/></svg></div>
<div class="t" style="left:1078.5px;top:200.3px;font-size:9.5px;color:#333">Límec:</div>
<div class="cb" style="left:1112px;top:199.8px"></div>

<!-- object list -->
<div class="abs" style="left:955px;top:225.8px;width:318px;height:474.3px;background:#fff"></div>
<div class="abs" style="left:955px;top:238px;width:318px;height:1px;background:#ececec"></div>
<div class="abs" style="left:1117.5px;top:228px;width:1px;height:8.6px;background:#e2e2e2"></div>
<div class="t" style="left:956.5px;top:227.2px;font-size:9.6px;color:#262626">Název</div>
<div class="t" style="left:968.7px;top:242.3px;font-size:10.8px;color:#262626">merka%201.stl</div>
<div class="t" style="left:968.7px;top:257.7px;font-size:10.8px;color:#262626">merka%201.stl</div>
<svg class="abs" style="left:1185px;top:238px" width="20" height="34" viewBox="1185 238 20 34">
<g id="edi"><rect x="1190.6" y="244.6" width="7.6" height="7.9" rx="1.6" fill="none" stroke="#a0a0a0" stroke-width="1.1"/>
<circle cx="1197.5" cy="245.1" r="2.35" fill="#fff" stroke="#ee8a3c" stroke-width="1.15"/></g>
<use href="#edi" y="15.4"/>
</svg>

<!-- info -->
<div class="t" style="left:966.4px;top:705.4px;font-size:9.6px;color:#333">Informace o slicování</div>
<div class="abs" style="left:957.7px;top:715.5px;width:312.3px;height:95px;background:#d9d9d9;border-radius:4px"></div>
<div class="t" style="left:965.8px;top:723.5px;font-size:9.6px;color:#333">Použito Filamentu (m)</div>
<div class="t" style="left:1085.6px;top:723.5px;font-size:9.6px;color:#333">0.88</div>
<div class="t" style="left:965.8px;top:739px;font-size:9.6px;color:#333">Použito Filamentu (mm³)</div>
<div class="t" style="left:1085.6px;top:739px;font-size:9.6px;color:#333">2109.11</div>
<div class="t" style="left:965.8px;top:754.1px;font-size:9.6px;color:#333">Použito Filamentu (g)</div>
<div class="t" style="left:1085.6px;top:754.1px;font-size:9.6px;color:#333">2.64</div>
<div class="t" style="left:965.8px;top:769.2px;font-size:9.6px;color:#333">Náklady</div>
<div class="t" style="left:1085.6px;top:769.2px;font-size:9.6px;color:#333">3.16</div>
<div class="t" style="left:965.8px;top:784.7px;font-size:9.6px;color:#333">Odhadovaný čas tisku :</div>
<div class="t" style="left:976.2px;top:795.2px;font-size:9.6px;color:#333">- normální režim</div>
<div class="t" style="left:1085.6px;top:795.2px;font-size:9.6px;color:#333">17m 22s</div>

<div class="btn" style="left:955.5px;top:818.8px;width:316.7px;height:16.6px;border-radius:3.5px"></div>
<div class="t" style="left:955.5px;top:822.2px;width:316.5px;text-align:center;font-size:9.8px;font-weight:bold;color:#1a1a1a">Odeslat G-code</div>
<div class="btn" style="left:955.5px;top:839.8px;width:316.7px;height:16.4px;border-radius:3.5px"></div>
<div class="t" style="left:955.5px;top:843.2px;width:316.5px;text-align:center;font-size:9.8px;font-weight:bold;color:#1a1a1a">Exportovat G-code</div>

<!-- bottom toolbar -->
<div class="t" style="left:8.4px;top:836.8px;font-size:9.5px;color:#333">Zobrazení</div>
<div class="abs" style="left:56.3px;top:833px;width:94.2px;height:15.8px;background:#fff;border-radius:3.5px;box-shadow:0 0 0 0.5px #c4c4c4,0 0.5px 1px rgba(0,0,0,0.2)"></div>
<div class="abs" style="left:137.8px;top:833px;width:12.7px;height:15.8px;background:linear-gradient(#5aa0fb,#2a72f3);border-radius:0 3.5px 3.5px 0"></div>
<svg class="abs" style="left:137px;top:833px" width="14" height="16" viewBox="0 0 14 16"><path d="M4.3 6.3 L6.9 3.6 L9.5 6.3 M4.3 9.6 L6.9 12.3 L9.5 9.6" fill="none" stroke="#fff" stroke-width="1.5"/></svg>
<div class="t" style="left:63.3px;top:835.6px;font-size:9.8px;color:#1a1a1a">Typ</div>
<div class="t" style="left:165.2px;top:837px;font-size:9.8px;color:#333">Zobrazit</div>
<div class="combo" style="left:206px;top:832.3px;width:99.7px;height:17px"></div>
<div class="t" style="left:209.5px;top:836.4px;font-size:9.8px;color:#1a1a1a">Typy extruzí</div>
<div class="btn" style="left:309.8px;top:832.7px;width:15px;height:15.6px"><svg class="chev" width="8" height="5" viewBox="0 0 8 5"><path d="M1.2 1.2 L4 3.8 L6.8 1.2" fill="none" stroke="#1c1c1c" stroke-width="1.1" stroke-linecap="round" stroke-linejoin="round"/></svg></div>
<div class="cb" style="left:352.7px;top:835.6px"></div>
<div class="t" style="left:367.2px;top:836.8px;font-size:9.8px;color:#333">Rychloposun</div>
<div class="cb" style="left:441px;top:835.6px"></div>
<div class="t" style="left:455.5px;top:836.8px;font-size:9.8px;color:#333">Retrakce</div>
<div class="cb" style="left:512.7px;top:835.6px"></div>
<div class="t" style="left:527.4px;top:836.8px;font-size:9.8px;color:#333">Deretrakce</div>
<div class="cb" style="left:593.4px;top:835.6px"></div>
<div class="t" style="left:607.6px;top:836.8px;font-size:9.8px;color:#333">Skořápky</div>

<!-- status bar -->
<div class="abs" style="left:0;top:867px;width:1280px;height:12px;background:linear-gradient(#e9e9e9,#dedede);border-top:1px solid #cdcdcd"></div>
<div class="t" style="left:2.8px;top:871.5px;font-size:9.6px;color:#3a3a3a">Slicování dokončeno...</div>
</body></html>
